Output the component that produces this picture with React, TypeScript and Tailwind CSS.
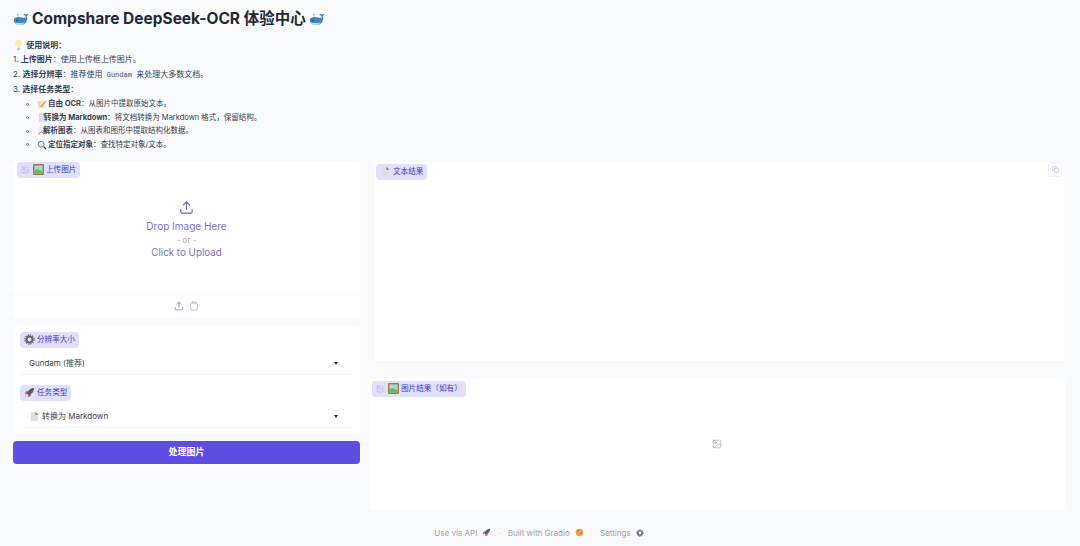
import React from 'react';
import { Upload, Clipboard, Copy, Image as ImageIcon } from 'lucide-react';

const cjk = 'font-["Inter","Noto_Sans_CJK_SC",sans-serif]';

const Whale = () => (
  <svg viewBox="0 0 20 16" className="h-[15px] w-[16px] shrink-0">
    <path d="M1 9c0-3 3-4 6-4s6 1 8 1c1 0 1-2 0-3-1 0-2-1-2-2 1 0 2 0 3 1 1-1 2-1 3-1 0 1-1 2-2 3 1 2 1 4 0 6-1 3-4 5-8 5s-8-2-8-6z" fill="#3b88c3" />
    <path d="M2 11c3 2 9 2 13 0-2 3-4 4-7 4s-5-1-6-4z" fill="#c8dbe6" />
    <path d="M6 4V2.500M6 2.500L4.500 1M6 2.500L7.500 1" stroke="#7fb8dc" strokeWidth="1" fill="none" />
    <circle cx="5" cy="9" r="0.800" fill="#10263a" />
  </svg>
);

const Bulb = () => (
  <svg viewBox="0 0 12 16" className="ml-px inline-block h-[12px] w-[9px] align-[-3px]">
    <path d="M6 1a4.600 4.600 0 0 0-3 8c.6.6 1 1.400 1 2.500h4c0-1 .4-1.900 1-2.500a4.600 4.600 0 0 0-3-8z" fill="#fbe9a8" />
    <rect x="4" y="12" width="4" height="3" rx="1" fill="#c4c8ce" />
  </svg>
);

const Memo = () => (
  <svg viewBox="0 0 12 12" className="inline-block h-[10px] w-[10px] shrink-0 align-[-1px]">
    <rect x="1" y="2" width="9" height="9" rx="1" fill="#efe1bd" transform="rotate(-8 6 6)" />
    <path d="M4 9l6-7 1 1-6 7z" fill="#c89a5b" />
  </svg>
);

const Doc = () => (
  <svg viewBox="0 0 12 12" className="inline-block h-[11px] w-[11px] shrink-0 align-[-1px]">
    <path d="M2 1h5l3 3v7H2z" fill="#dedee1" />
    <path d="M7 1v3h3z" fill="#6f7176" />
  </svg>
);

const ChartEmoji = () => (
  <svg viewBox="0 0 12 12" className="inline-block h-[10px] w-[10px] shrink-0 align-[-1px]">
    <rect x="1" y="1" width="10" height="10" fill="#eeeef0" />
    <path d="M2 10l3-3 2 1 3-5" fill="none" stroke="#d0605e" strokeWidth="1" />
  </svg>
);

const Magnifier = () => (
  <svg viewBox="0 0 12 12" className="inline-block h-[10px] w-[10px] shrink-0 align-[-1px]">
    <circle cx="5" cy="5" r="3.500" fill="#dbe8f2" stroke="#7d8791" strokeWidth="1.200" />
    <path d="M8 8l3 3" stroke="#3a3f46" strokeWidth="1.600" />
  </svg>
);

const Picture = () => (
  <svg viewBox="0 0 12 12" className="h-[11px] w-[11px] shrink-0">
    <rect width="12" height="12" rx="1" fill="#9c7a3a" />
    <rect x="1.500" y="1.500" width="9" height="9" fill="#a8d8e8" />
    <path d="M1.500 10.500V7l3-1.500 6 2.500v2.500z" fill="#6dbb4a" />
  </svg>
);

const Gear = ({ size = 'h-[11px] w-[11px]' }: { size?: string }) => (
  <svg viewBox="0 0 12 12" className={`${size} shrink-0`}>
    <circle cx="6" cy="6" r="3.200" fill="none" stroke="#5f6672" strokeWidth="2.200" />
    <circle cx="6" cy="6" r="5" fill="none" stroke="#5f6672" strokeWidth="1.400" strokeDasharray="1.500 1.100" />
  </svg>
);

const Rocket = ({ size = 'h-[11px] w-[11px]' }: { size?: string }) => (
  <svg viewBox="0 0 12 12" className={`${size} shrink-0`}>
    <path d="M11 1C7 1 4 4 3 7l2 2c3-1 6-4 6-8z" fill="#565e6e" />
    <path d="M3 7L1 8l1-3 2-1zM5 9L4 11l3-1 1-2z" fill="#c4473a" />
    <path d="M3 9l-2 2 1-3z" fill="#f0a030" />
  </svg>
);

const Cookie = () => (
  <svg viewBox="0 0 12 12" className="h-[9px] w-[9px] shrink-0">
    <circle cx="6" cy="6" r="5" fill="#eaa24b" />
    <circle cx="4" cy="4" r="1" fill="#a0622a" />
    <circle cx="8" cy="7" r="1" fill="#a0622a" />
  </svg>
);

const BlockLabel = ({ children, icon }: { children: React.ReactNode; icon?: boolean }) => (
  <div className="flex h-4 w-fit items-center gap-[2px] rounded-[4px] bg-[#e0e0fc] px-[4px] text-[7.600px] leading-none text-[#4338ca]">
    {icon && <ImageIcon className="mr-[2px] h-2 w-2 text-[#a5a5e0]" strokeWidth={1.500} />}
    {children}
  </div>
);

const Select = ({ children }: { children: React.ReactNode }) => (
  <div className="flex h-[22px] items-center justify-between rounded-[4px] border-b border-[#f1f3f5] bg-white pl-[9px] pr-[15px] text-[8px] text-[#374151]">
    <span className="flex items-center gap-[2px]">{children}</span>
    <span className="h-0 w-0 border-x-[2.500px] border-t-[3px] border-x-transparent border-t-[#1f2937]" />
  </div>
);

const Bullet = ({ icon, narrow, children }: { icon: React.ReactNode; narrow?: boolean; children: React.ReactNode }) => (
  <li className="flex h-[10px] items-center">
    <span className="mr-[8px] h-[3px] w-[3px] rounded-full border border-[#6b7280]" />
    {icon}
    <span className={narrow ? '-ml-[4px]' : 'ml-[1px]'}>{children}</span>
  </li>
);

export default function App() {
  return (
    <div className={`flex h-[546px] w-[1080px] flex-col overflow-hidden bg-[#f9fafb] pl-[13px] pr-[15px] text-[#1f2937] ${cjk}`}>
      <h1 className="mt-[11px] flex h-4 items-center gap-[3px] text-[15.500px] font-bold leading-none text-[#1f2937]">
        <Whale />
        <span>Compshare DeepSeek-OCR 体验中心</span>
        <Whale />
      </h1>

      <div className="mt-[12px] flex flex-col gap-[5px] text-[8px] leading-[10px] text-[#374151]">
        <p className="h-[10px]"><Bulb /> <b className="ml-[1px]">使用说明：</b></p>
        <p className="h-[10px]">1. <b>上传图片</b>：使用上传框上传图片。</p>
        <p className="h-[10px]">2. <b>选择分辨率</b>：推荐使用 <code className="rounded-[2px] bg-[#f3f4f6] px-[2px] font-['Liberation_Mono'] text-[7px] font-normal text-[#4b5563]">Gundam</code> 来处理大多数文档。</p>
        <p className="h-[10px]">3. <b>选择任务类型</b>：</p>
        <ul className="flex flex-col gap-[3.500px] pl-[13px] text-[7.500px]">
          <Bullet icon={<Memo />}><b>自由 OCR</b>：从图片中提取原始文本。</Bullet>
          <Bullet icon={<Doc />} narrow><b>转换为 Markdown</b>：将文档转换为 Markdown 格式，保留结构。</Bullet>
          <Bullet icon={<ChartEmoji />} narrow><b>解析图表</b>：从图表和图形中提取结构化数据。</Bullet>
          <Bullet icon={<Magnifier />}><b>定位指定对象</b>：查找特定对象/文本。</Bullet>
        </ul>
      </div>

      <div className="mt-[11px] flex gap-[9px]">
        {/* left column */}
        <div className="flex w-[347px] flex-col">
          <div className="h-[133px] rounded-[4px] bg-white">
            <div className="px-[4px] pt-px">
              <BlockLabel icon><Picture />上传图片</BlockLabel>
            </div>
            <div className="mt-[22px] flex flex-col items-center text-[#7a72c8]">
              <Upload className="h-[15px] w-[15px] text-[#6d62c9]" strokeWidth={1.800} />
              <span className="mt-[5px] text-[10px] leading-[12px]">Drop Image Here</span>
              <span className="mt-[2px] text-[8px] leading-[12px] text-[#a3a9b3]">- or -</span>
              <span className="text-[9.800px] leading-[14px]">Click to Upload</span>
            </div>
          </div>
          <div className="mt-px flex h-[23px] items-center justify-center gap-[5px] rounded-[4px] bg-white text-[#7c7ba8]">
            <Upload className="h-[10px] w-[10px]" strokeWidth={1.800} />
            <Clipboard className="h-[10px] w-[10px] text-[#9ca3af]" strokeWidth={1.500} />
          </div>

          <div className="mt-[8px] flex h-[107px] flex-col rounded-[4px] bg-white px-[7px] pt-[6px]">
            <BlockLabel><Gear />分辨率大小</BlockLabel>
            <div className="mt-[5px]"><Select>Gundam (推荐)</Select></div>
            <div className="mt-[10px]"><BlockLabel><Rocket />任务类型</BlockLabel></div>
            <div className="mt-[5px]"><Select><Doc />转换为 Markdown</Select></div>
          </div>

          <button className="mt-[8px] h-[23px] rounded-[4px] bg-[#5f4de3] text-[9px] font-bold text-white">处理图片</button>
        </div>

        {/* right column */}
        <div className="flex flex-1 flex-col">
          <div className="ml-[6px] mr-px mt-px h-[201px] rounded-[4px] border-b border-[#f1f3f5] bg-white">
            <div className="flex items-start justify-between pl-px pr-[2px] pt-[2px]">
              <BlockLabel><Doc />文本结果</BlockLabel>
              <span className="-mt-[2px] flex h-[15px] w-[14px] items-center justify-center rounded-[2px] border border-[#f0f1f4] text-[#9a9ab8]">
                <Copy className="h-[7px] w-[7px]" strokeWidth={1.500} />
              </span>
            </div>
          </div>
          <div className="mt-[15px] flex h-[132px] flex-col rounded-[4px] bg-white px-[3px] pt-[3px]">
            <BlockLabel icon><Picture />图片结果（如有）</BlockLabel>
            <div className="flex flex-1 items-center justify-center pb-[18px] text-[#9ca3af]">
              <ImageIcon className="h-[10px] w-[10px]" strokeWidth={1.500} />
            </div>
          </div>
        </div>
      </div>

      <footer className="mt-[18px] flex items-center justify-center gap-[5px] text-[8px] leading-[10px] text-[#9ca3af]">
        <span>Use via API</span><Rocket size="h-[9px] w-[9px]" />
        <span className="mx-[2px] text-[#c7d2e4]">·</span>
        <span>Built with Gradio</span><Cookie />
        <span className="mx-[2px] text-[#c7d2e4]">·</span>
        <span>Settings</span><Gear size="h-[8px] w-[8px]" />
      </footer>
    </div>
  );
}
